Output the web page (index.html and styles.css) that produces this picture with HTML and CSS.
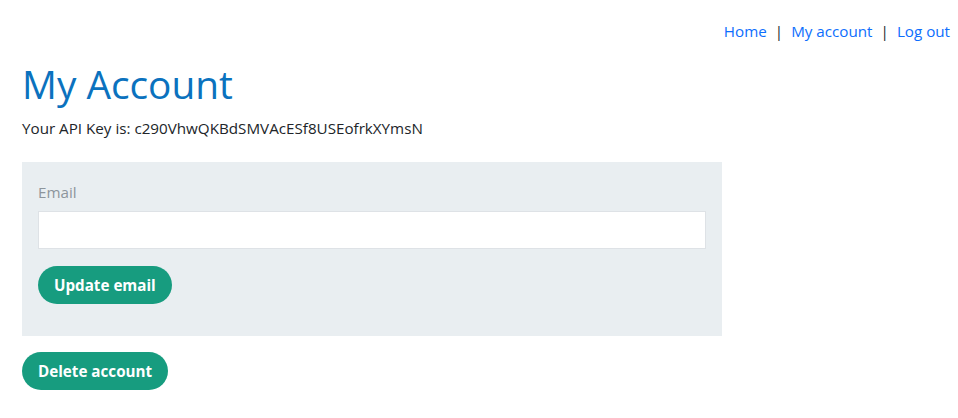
FILE: index.html
```html
<!DOCTYPE html>
<html>
<head>
<meta charset="utf-8">
<link rel="stylesheet" href="styles.css">
</head>
<body>
<nav class="topnav">
  <a href="#">Home</a><span class="sep">|</span><a href="#">My account</a><span class="sep">|</span><a href="#">Log out</a>
</nav>
<main class="page">
  <h1 class="title">My Account</h1>
  <p class="apikey">Your API Key is: c290VhwQKBdSMVAcESf8USEofrkXYmsN</p>
  <form class="panel">
    <label class="label" for="email">Email</label>
    <input class="input" id="email" type="email">
    <button class="btn" type="button">Update email</button>
  </form>
  <button class="btn" type="button">Delete account</button>
</main>
</body>
</html>
```

FILE: styles.css
```css
* { box-sizing: border-box; }
body {
  margin: 0;
  font-family: "Open Sans", "Noto Sans", sans-serif;
  font-size: 15.2px;
  color: #212529;
  background: #fff;
}
.topnav {
  display: flex;
  justify-content: flex-end;
  align-items: center;
  padding: 20px 8px 0 0;
  height: 42px;
  line-height: 22px;
}
.topnav a {
  color: #0d6efd;
  text-decoration: none;
}
.sep {
  margin: 0 8px;
  color: #212529;
}
.page {
  padding: 0 22px;
}
.title {
  margin: 18px 0 0;
  font-size: 38.8px;
  font-weight: 400;
  line-height: 48px;
  color: #0b72be;
}
.apikey {
  margin: 8px 0 0;
  line-height: 24px;
}
.panel {
  margin-top: 22px;
  width: 700px;
  background: #e9eef1;
  padding: 18px 16px 32px;
  display: flex;
  flex-direction: column;
  align-items: flex-start;
}
.label {
  color: #8d959c;
  line-height: 24px;
  margin-bottom: 7px;
}
.input {
  width: 100%;
  height: 38px;
  border: 1px solid #dee2e6;
  background: #fff;
  margin: 0 0 17px;
}
.btn {
  font-family: inherit;
  font-size: 15.2px;
  font-weight: 700;
  color: #fff;
  background: #179c7f;
  border: none;
  border-radius: 19px;
  height: 38px;
  padding: 0 16px;
}
.page > .btn {
  margin-top: 16px;
}
```
